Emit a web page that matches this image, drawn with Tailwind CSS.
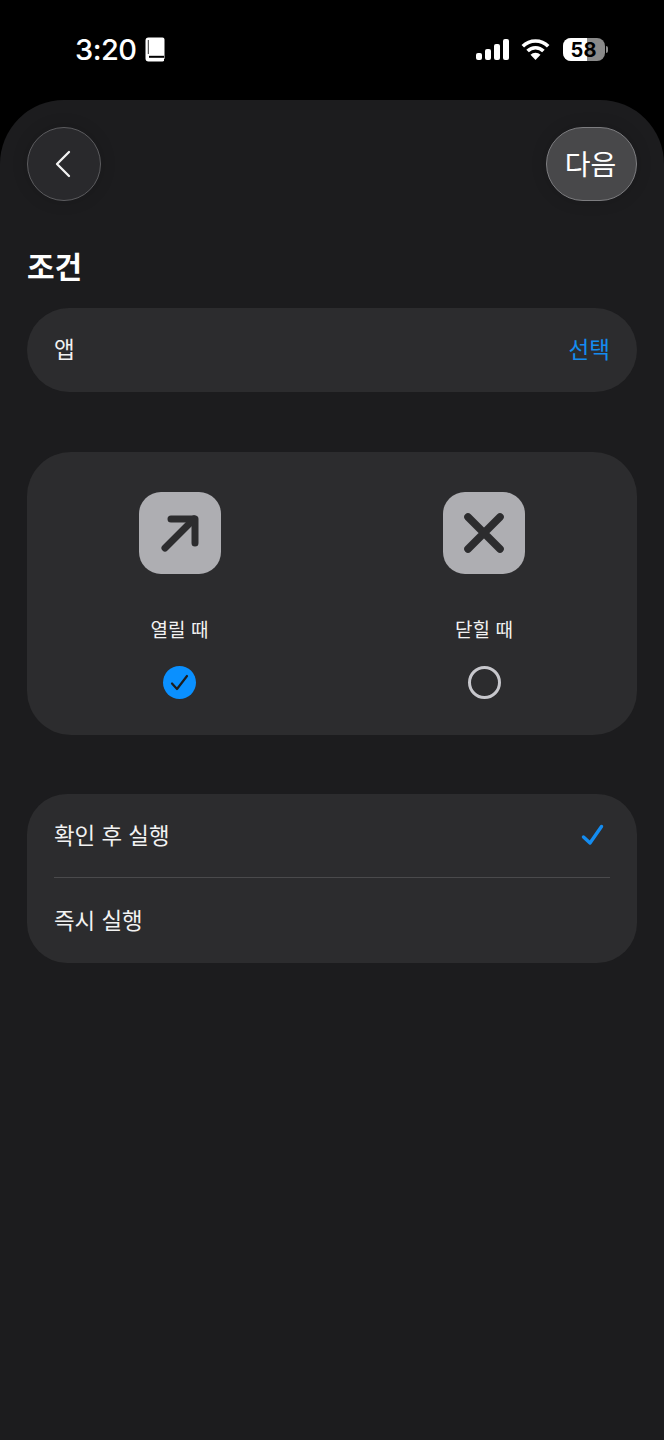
<!DOCTYPE html>
<html lang="ko">
<head>
  <meta charset="UTF-8" />
  <title>조건</title>
  <script src="https://cdn.jsdelivr.net/npm/@tailwindcss/browser@4"></script>
</head>
<body class="bg-black text-white w-[664px] h-[1440px] overflow-hidden font-['Inter','Noto_Sans_CJK_KR',sans-serif]">
  <!-- status bar -->
  <div class="h-[100px] flex items-start justify-between pl-[75px] pr-[56px] pt-[31px]">
    <div class="flex items-center gap-[8px] h-[38px]">
      <span class="text-[29px] leading-[38px] font-medium text-white tracking-[-0.5px]">3:20</span>
      <svg class="-mt-[1px]" width="20" height="25" viewBox="0 0 20 25" fill="none">
        <path d="M3.500 0.500H17.500A2 2 0 0 1 19.500 2.500V22.500A2 2 0 0 1 17.500 24.500H3.500A3 3 0 0 1 0.500 21.500V3.500A3 3 0 0 1 3.500 0.500z" fill="#fff"/>
        <path d="M3.300 3v14" stroke="#000" stroke-width="0.800"/>
        <path d="M4 19.800h15" stroke="#000" stroke-width="2"/>
        <path d="M19 22h1v3h-1z" fill="#000"/>
      </svg>
    </div>
    <div class="flex items-center h-[37px]">
      <svg width="33" height="21" viewBox="0 0 33 21" fill="#fff">
        <rect x="0" y="14" width="6" height="7" rx="2"/>
        <rect x="9" y="10" width="6" height="11" rx="2"/>
        <rect x="18" y="5" width="6" height="16" rx="2"/>
        <rect x="27" y="0" width="6" height="21" rx="2"/>
      </svg>
      <svg class="ml-[12px]" width="29" height="21" viewBox="0 0 29 21" fill="none" stroke="#fff" stroke-width="3.600">
        <path d="M1.800 7.200a18 18 0 0 1 25.400 0"/>
        <path d="M6.600 12a11.200 11.200 0 0 1 15.800 0"/>
        <path d="M14.500 21l-5-5.200a7 7 0 0 1 10 0z" fill="#fff" stroke="none"/>
      </svg>
      <div class="ml-[13px] relative w-[42px] h-[23px] rounded-[8px] overflow-hidden bg-[#8a8a8a] flex items-center justify-center pr-[1px]">
        <div class="absolute left-0 top-0 bottom-0 w-[24px] bg-white"></div>
        <span class="relative text-black text-[20px] leading-none font-bold">58</span>
      </div>
      <div class="ml-[1px] w-[2px] h-[7px] rounded-r-full bg-[#8a8a8a]"></div>
    </div>
  </div>

  <!-- sheet -->
  <div class="h-[1340px] rounded-t-[64px] bg-[#1c1c1e] px-[27px] pt-[27px] font-['Noto_Sans_CJK_KR',sans-serif]">
    <div class="flex items-center justify-between">
      <button class="w-[74px] h-[74px] rounded-full bg-[#29292c] border border-[#5c5c5f] flex items-center justify-center shadow-[0_0_16px_rgba(0,0,0,0.15)]">
        <svg class="mr-[3px]" width="18" height="28" viewBox="0 0 18 28" fill="none" stroke="#f2f2f2" stroke-width="2.300" stroke-linecap="round" stroke-linejoin="round"><path d="M15 2 3 14l12 12"/></svg>
      </button>
      <button class="w-[91px] h-[74px] rounded-full bg-[#48484a] border border-[#7d7d80] pr-[2px] pb-[2px] text-[28px] leading-none font-normal text-white flex items-center justify-center shadow-[0_0_16px_rgba(0,0,0,0.15)]">다음</button>
    </div>

    <h1 class="mt-[46px] h-[38px] text-[30px] leading-[36px] font-bold text-white">조건</h1>

    <div class="mt-[23px] h-[84px] rounded-[42px] bg-[#2c2c2e] px-[27px] pb-[3px] flex items-center justify-between text-[22.500px]">
      <span class="text-[#f2f2f2]">앱</span>
      <span class="text-[#148cf0]">선택</span>
    </div>

    <div class="mt-[60px] h-[283px] rounded-[44px] bg-[#2c2c2e] grid grid-cols-2 pt-[40px]">
      <div class="flex flex-col items-center">
        <div class="w-[82px] h-[82px] rounded-[22px] bg-[#aeaeb2] flex items-center justify-center">
          <svg width="42" height="42" viewBox="0 0 42 42" fill="none" stroke="#2c2c2e" stroke-width="7" stroke-linecap="round" stroke-linejoin="round"><path d="M6 36 35 7"/><path d="M12 7h24v24"/></svg>
        </div>
        <span class="mt-[40px] text-[19px] leading-[30px] text-[#f2f2f2]">열릴 때</span>
        <div class="mt-[22px] w-[33px] h-[33px] rounded-full bg-[#0a90ff] flex items-center justify-center">
          <svg width="19" height="17" viewBox="0 0 19 17" fill="none" stroke="#1c1c1e" stroke-width="2.200" stroke-linecap="round" stroke-linejoin="round"><path d="M2 9.500 7 15 17 2"/></svg>
        </div>
      </div>
      <div class="flex flex-col items-center">
        <div class="w-[82px] h-[82px] mr-[2px] rounded-[22px] bg-[#aeaeb2] flex items-center justify-center">
          <svg width="42" height="42" viewBox="0 0 42 42" fill="none" stroke="#2c2c2e" stroke-width="7.600" stroke-linecap="round"><path d="M5 5l32 32M37 5 5 37"/></svg>
        </div>
        <span class="mt-[40px] mr-[1px] text-[19px] leading-[30px] text-[#f2f2f2]">닫힐 때</span>
        <div class="mt-[22px] w-[33px] h-[33px] rounded-full border-[3px] border-[#c7c7cc]"></div>
      </div>
    </div>

    <div class="mt-[59px] h-[169px] rounded-[40px] bg-[#2c2c2e] px-[27px] text-[22.400px] text-[#f2f2f2] flex flex-col">
      <div class="h-[84px] pb-[1px] flex items-center justify-between border-b border-[#4a4a4c]">
        <span>확인 후 실행</span>
        <svg class="mr-[6px]" width="24" height="24" viewBox="0 0 24 24" fill="none" stroke="#148cf0" stroke-width="3.400" stroke-linecap="round" stroke-linejoin="round"><path d="M3.500 14 10 20 21.500 3.500"/></svg>
      </div>
      <div class="flex-1 pb-[1px] flex items-center"><span>즉시 실행</span></div>
    </div>
  </div>
</body>
</html>
